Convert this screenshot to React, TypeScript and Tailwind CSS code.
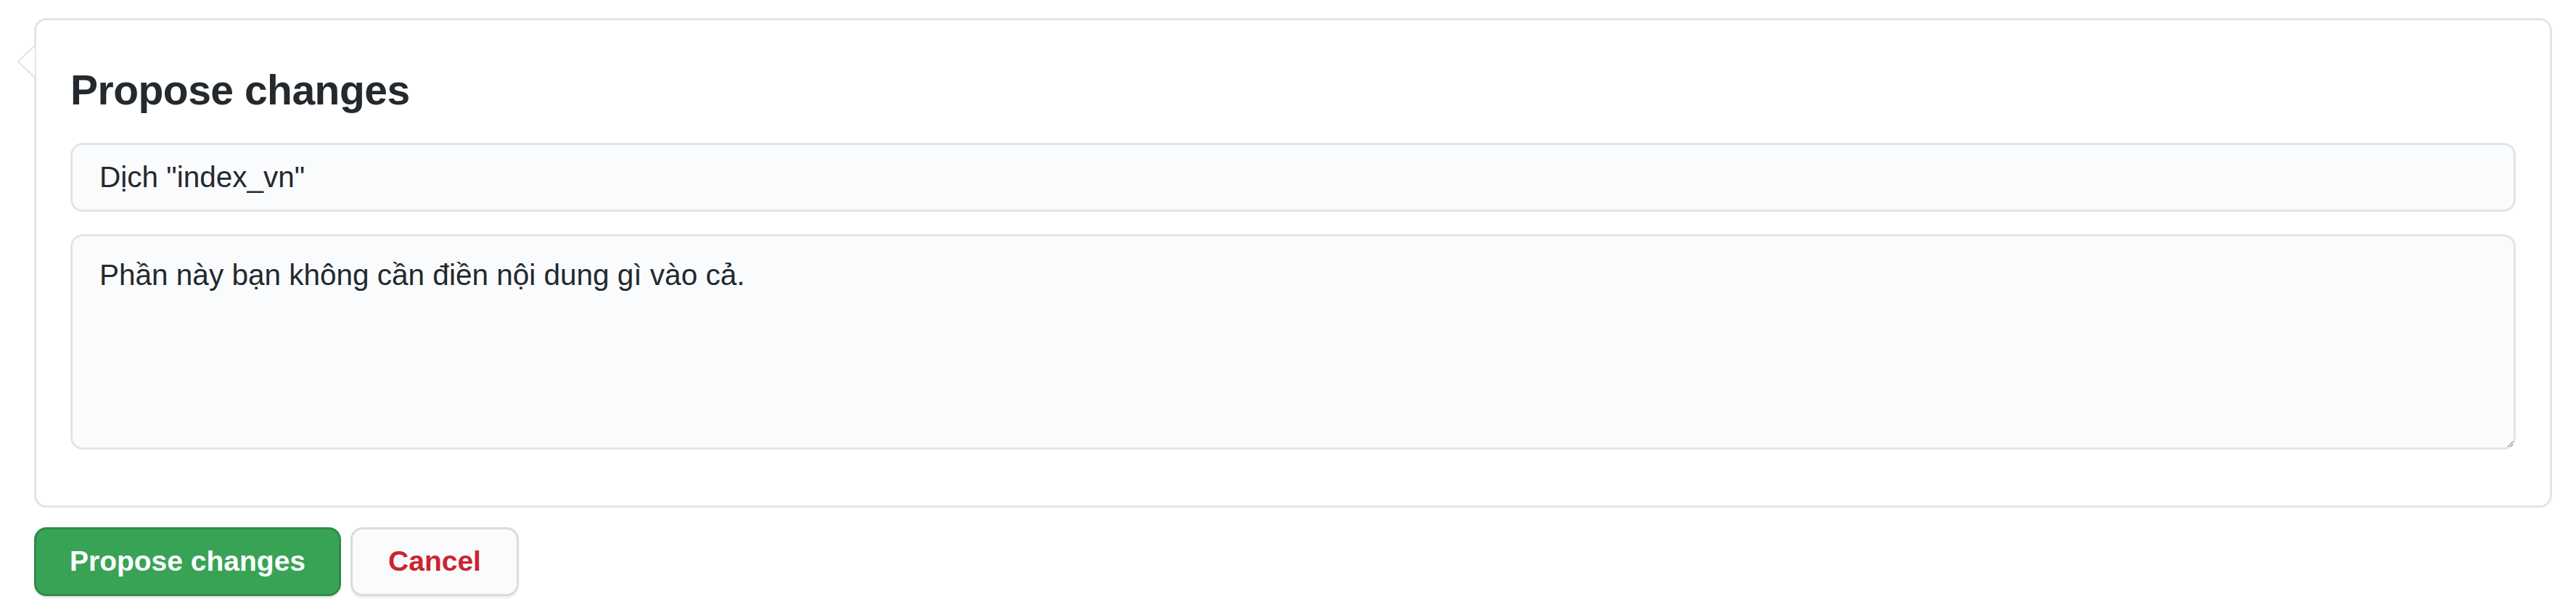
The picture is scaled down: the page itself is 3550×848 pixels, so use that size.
import React from "react";

export default function App() {
  return (
    <div className="w-[3550px] h-[848px] bg-white text-[#24292e] font-['Liberation_Sans',Arial,sans-serif]">
      <div className="pl-[47px] pr-[33px] pt-[25px]">
        <div className="relative rounded-[17px] border-[3px] border-[#e1e4e8] bg-white px-[47px] pt-[54px] pb-[77px]">
          <svg
            className="absolute left-[-27px] top-[34px]"
            width="26"
            height="46"
            viewBox="0 0 26 46"
          >
            <polyline
              points="25,1 2,23 25,45"
              fill="#ffffff"
              stroke="#e1e4e8"
              strokeWidth="2"
            />
          </svg>
          <h3 className="text-[57px] leading-[1.5] font-bold tracking-[-0.5px]">
            Propose changes
          </h3>
          <input
            readOnly
            value={'Dịch "index_vn"'}
            className="mt-[29px] block w-full h-[95px] px-[37px] rounded-[17px] border-[3px] border-[#e1e4e8] bg-[#fafbfc] text-[40.5px] text-[#24292e] outline-none"
          />
          <textarea
            readOnly
            defaultValue="Phần này bạn không cần điền nội dung gì vào cả."
            className="mt-[31px] block w-full h-[297px] px-[37px] py-[24px] rounded-[17px] border-[3px] border-[#e1e4e8] bg-[#fafbfc] text-[40.5px] leading-[59px] text-[#24292e] outline-none"
          />
        </div>
        <div className="mt-[27px] flex gap-[13px]">
          <button className="w-[423px] h-[95px] flex items-center justify-center rounded-[17px] border-[3px] border-[#2e8b47] bg-[#38a355] text-white text-[39px] font-bold shadow-[0_3px_0_rgba(27,31,35,0.08)]">
            Propose changes
          </button>
          <button className="w-[232px] h-[95px] flex items-center justify-center rounded-[17px] border-[3px] border-[#dadbdc] bg-[#fafbfc] text-[#cb2431] text-[39px] font-bold shadow-[0_3px_0_rgba(27,31,35,0.06)]">
            Cancel
          </button>
        </div>
      </div>
    </div>
  );
}
